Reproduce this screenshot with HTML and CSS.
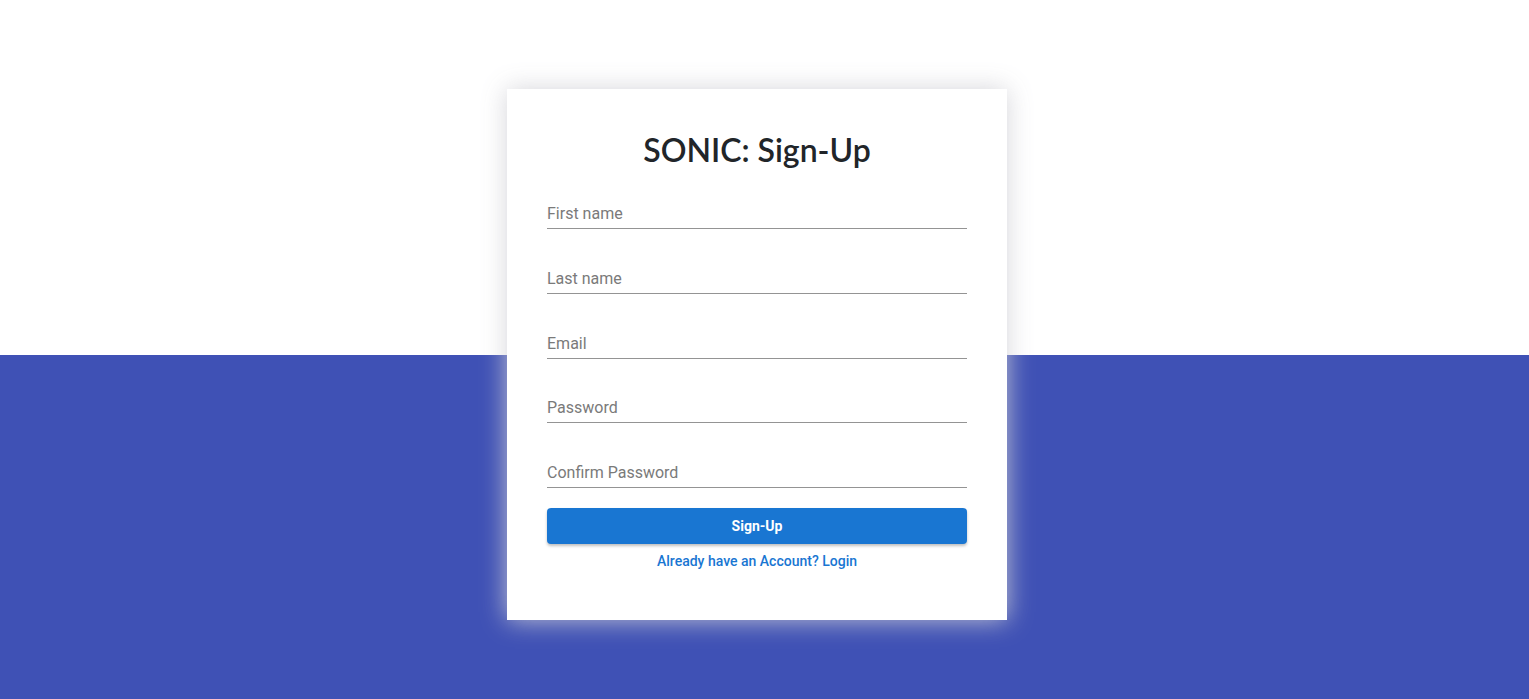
FILE: index.html
```html
<!DOCTYPE html>
<html>
<head>
<meta charset="utf-8">
<link rel="stylesheet" href="styles.css">
</head>
<body>
<div class="page">
  <div class="card">
    <h1 class="title">SONIC: Sign-Up</h1>
    <form class="form">
      <div class="field"><input class="input" type="text" placeholder="First name"></div>
      <div class="field"><input class="input" type="text" placeholder="Last name"></div>
      <div class="field"><input class="input" type="email" placeholder="Email"></div>
      <div class="field"><input class="input" type="password" placeholder="Password"></div>
      <div class="field"><input class="input" type="password" placeholder="Confirm Password"></div>
      <button class="btn" type="button">Sign-Up</button>
      <a class="link" href="#">Already have an Account? Login</a>
    </form>
  </div>
</div>
</body>
</html>
```
FILE: styles.css
```css
* { box-sizing: border-box; }
html, body { margin: 0; padding: 0; }
body { font-family: Roboto, "Liberation Sans", sans-serif; }
.page {
  height: 699px;
  background: linear-gradient(to bottom, #ffffff 0, #ffffff 355px, #3f51b5 355px, #3f51b5 100%);
  display: flex;
  justify-content: center;
  align-items: flex-start;
  padding-top: 89px;
  padding-right: 15px;
}
.card {
  width: 500px;
  height: 531px;
  background: #fff;
  box-shadow: 0 0 24px rgba(208, 208, 214, 0.9);
  padding: 40px 40px;
}
.title {
  margin: 0;
  text-align: center;
  font-family: Lato, "Noto Sans", sans-serif;
  font-weight: 600;
  font-size: 32px;
  line-height: 42px;
  color: #212529;
}
.form {
  display: flex;
  flex-direction: column;
  margin-top: 28px;
}
.field + .field { margin-top: 34.75px; }
.input {
  display: block;
  width: 100%;
  border: none;
  border-bottom: 1px solid #949494;
  outline: none;
  padding: 5px 0 5px;
  font-family: Roboto, sans-serif;
  font-size: 16px;
  line-height: 19px;
  height: 30px;
  color: #222;
  background: transparent;
}
.input::placeholder { color: #7a7a7a; opacity: 1; }
.btn {
  margin-top: 20px;
  height: 36px;
  border: none;
  border-radius: 4px;
  background: #1976d2;
  color: #fff;
  font-family: Roboto, sans-serif;
  font-weight: 700;
  font-size: 14px;
  box-shadow: 0 2px 3px rgba(0, 0, 0, 0.25);
}
.link {
  margin-top: 9px;
  align-self: center;
  color: #1976d2;
  text-decoration: none;
  font-family: Roboto, sans-serif;
  font-weight: 500;
  font-size: 14px;
  line-height: 16px;
}
```
